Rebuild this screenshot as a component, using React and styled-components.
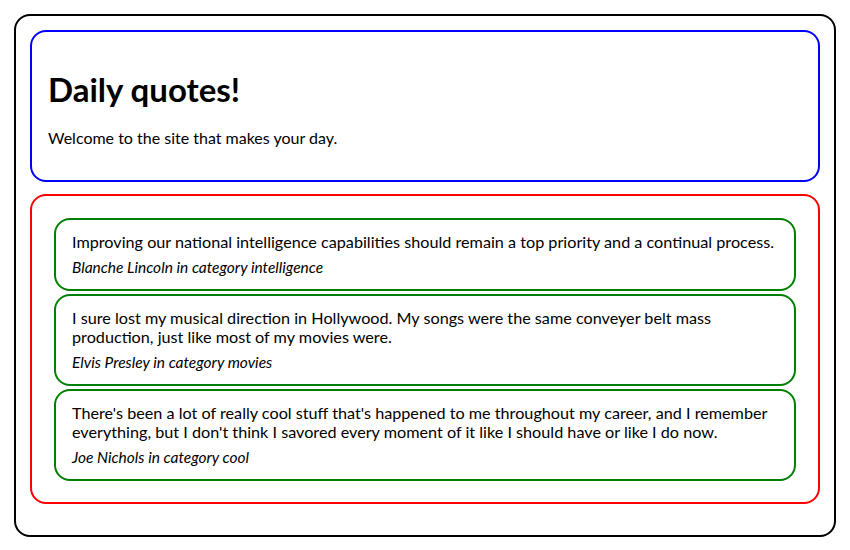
import React from "react";
import styled, { createGlobalStyle } from "styled-components";

const Global = createGlobalStyle`
  html, body { margin: 0; padding: 0; background: #fff; }
  body { font-family: Lato, "Noto Sans", sans-serif; color: #000; }
`;

const Page = styled.div`
  padding: 14px;
`;

const Frame = styled.div`
  border: 2px solid #000;
  border-radius: 16px;
  padding: 14px 14px 31px;
  display: flex;
  flex-direction: column;
  gap: 12px;
`;

const Header = styled.header`
  border: 2px solid #0000ff;
  border-radius: 16px;
  padding: 37px 16px 32px;
`;

const Title = styled.h1`
  margin: 0 0 19px;
  font-size: 33px;
  line-height: 40px;
  font-weight: 700;
`;

const Lead = styled.p`
  margin: 0;
  font-size: 16px;
  line-height: 20px;
`;

const List = styled.section`
  border: 2px solid #ff0000;
  border-radius: 16px;
  padding: 22px 22px 21px;
  display: flex;
  flex-direction: column;
  gap: 3.5px;
`;

const Card = styled.article`
  border: 2px solid #008000;
  border-radius: 16px;
  padding: 12px 16px 12.5px;
  display: flex;
  flex-direction: column;
  gap: 7px;
`;

const Text = styled.p`
  margin: 0;
  font-size: 16.2px;
  line-height: 19px;
`;

const Author = styled.p`
  margin: 0;
  font-size: 15.5px;
  line-height: 18px;
  font-style: italic;
`;

const quotes = [
  {
    text: "Improving our national intelligence capabilities should remain a top priority and a continual process.",
    author: "Blanche Lincoln",
    category: "intelligence",
  },
  {
    text: "I sure lost my musical direction in Hollywood. My songs were the same conveyer belt mass production, just like most of my movies were.",
    author: "Elvis Presley",
    category: "movies",
  },
  {
    text: "There's been a lot of really cool stuff that's happened to me throughout my career, and I remember everything, but I don't think I savored every moment of it like I should have or like I do now.",
    author: "Joe Nichols",
    category: "cool",
  },
];

export default function App() {
  return (
    <Page>
      <Global />
      <Frame>
        <Header>
          <Title>Daily quotes!</Title>
          <Lead>Welcome to the site that makes your day.</Lead>
        </Header>
        <List>
          {quotes.map((q) => (
            <Card key={q.author}>
              <Text>{q.text}</Text>
              <Author>
                {q.author} in category {q.category}
              </Author>
            </Card>
          ))}
        </List>
      </Frame>
    </Page>
  );
}
